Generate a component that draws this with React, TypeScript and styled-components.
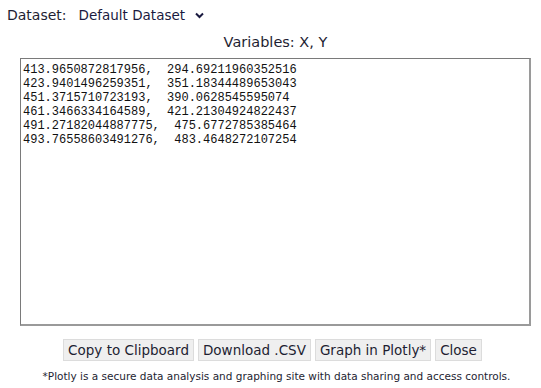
import React, { useState } from "react";
import styled, { createGlobalStyle } from "styled-components";

const GlobalStyle = createGlobalStyle`
  html, body {
    margin: 0;
    padding: 0;
    background: #ffffff;
  }
  body {
    font-family: "DejaVu Sans", Verdana, sans-serif;
    color: #1e1e32;
  }
`;

const Root = styled.div`
  width: 541px;
  height: 388px;
  display: flex;
  flex-direction: column;
  box-sizing: border-box;
  padding-top: 6px;
`;

const DatasetRow = styled.div`
  display: flex;
  align-items: center;
  padding-left: 7px;
  font-size: 14px;
  height: 18px;
`;

const DatasetLabel = styled.span`
  margin-right: 12px;
`;

const DatasetSelect = styled.span`
  display: inline-flex;
  align-items: center;
  gap: 10px;
  font-size: 13.5px;
  color: #1a1a40;
`;

const Title = styled.div`
  text-align: center;
  font-size: 14.5px;
  margin-top: 10px;
  height: 18px;
  padding-left: 10px;
`;

const DataArea = styled.textarea`
  display: block;
  margin: 6px 0 0 20px;
  width: 511px;
  height: 268px;
  box-sizing: border-box;
  padding: 4px 2px;
  resize: none;
  border-style: solid;
  border-width: 1px 2px 2px 1px;
  border-color: #7a7a7a #9a9a9a #9a9a9a #7a7a7a;
  font-family: "Liberation Mono", "DejaVu Sans Mono", monospace;
  font-size: 12px;
  line-height: 14px;
  color: #111;
  outline: none;
`;

const ButtonRow = styled.div`
  display: flex;
  justify-content: center;
  gap: 4px;
  margin-top: 13px;
  padding-left: 4px;
`;

const Button = styled.button`
  height: 22px;
  padding: 0 4px;
  background: #efefef;
  border: 1px solid #dcdcdc;
  border-radius: 0;
  font-family: "DejaVu Sans", Verdana, sans-serif;
  font-size: 13.5px;
  color: #1e1e32;
  cursor: pointer;
`;

const Footnote = styled.div`
  text-align: center;
  font-size: 10.5px;
  margin-top: 9px;
  padding-left: 12px;
`;

const Chevron = () => (
  <svg width="9" height="7" viewBox="0 0 9 7">
    <polyline
      points="1,1.5 4.5,5 8,1.5"
      fill="none"
      stroke="#1a1a40"
      strokeWidth="2"
    />
  </svg>
);

const rows = [
  "413.9650872817956,  294.69211960352516",
  "423.9401496259351,  351.18344489653043",
  "451.3715710723193,  390.0628545595074",
  "461.3466334164589,  421.21304924822437",
  "491.27182044887775,  475.6772785385464",
  "493.76558603491276,  483.4648272107254",
];

const App: React.FC = () => {
  const [text, setText] = useState(rows.join("\n"));

  return (
    <Root>
      <GlobalStyle />
      <DatasetRow>
        <DatasetLabel>Dataset:</DatasetLabel>
        <DatasetSelect>
          Default Dataset
          <Chevron />
        </DatasetSelect>
      </DatasetRow>
      <Title>Variables: X, Y</Title>
      <DataArea
        value={text}
        onChange={(e) => setText(e.target.value)}
        spellCheck={false}
      />
      <ButtonRow>
        <Button>Copy to Clipboard</Button>
        <Button>Download .CSV</Button>
        <Button>Graph in Plotly*</Button>
        <Button>Close</Button>
      </ButtonRow>
      <Footnote>
        *Plotly is a secure data analysis and graphing site with data sharing
        and access controls.
      </Footnote>
    </Root>
  );
};

export default App;
